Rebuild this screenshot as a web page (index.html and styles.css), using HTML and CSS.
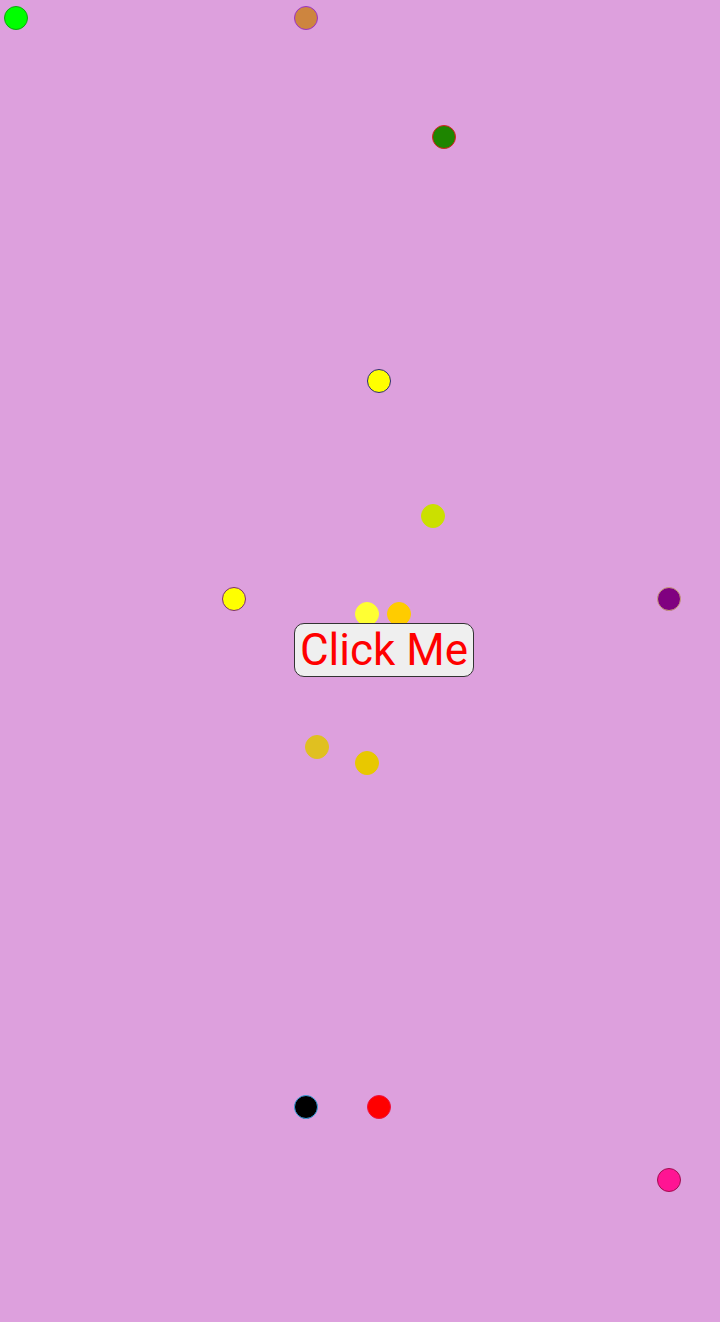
FILE: index.html
```html
<!DOCTYPE html>
<html>
<head>
<meta charset="utf-8">
<link rel="stylesheet" href="styles.css">
</head>
<body>
<div class="stage">
  <span class="dot d1"></span>
  <span class="dot d2"></span>
  <span class="dot d3"></span>
  <span class="dot d4"></span>
  <span class="dot d5"></span>
  <span class="dot d6"></span>
  <span class="dot d7"></span>
  <span class="dot d8"></span>
  <span class="dot d9"></span>
  <span class="dot d10"></span>
  <span class="dot d11"></span>
  <span class="dot d12"></span>
  <span class="dot d13"></span>
  <span class="dot d14"></span>
  <button class="btn">Click Me</button>
</div>
</body>
</html>
```

FILE: styles.css
```css
html, body {
  margin: 0;
  padding: 0;
  background: #dda0dd;
}
.stage {
  position: relative;
  width: 720px;
  height: 1322px;
  overflow: hidden;
}
.dot {
  position: absolute;
  width: 22px;
  height: 22px;
  border: 1px solid transparent;
  border-radius: 50%;
  box-sizing: content-box;
}
.d1 { left: 4px; top: 6px; background: #00ff00; border-color: #11a411; }
.d2 { left: 294px; top: 6px; background: #cd853f; border-color: #9932cc; }
.d3 { left: 432px; top: 125px; background: #1e8500; border-color: #dc2020; }
.d4 { left: 367px; top: 369px; background: #ffff00; border-color: #2b2b7a; }
.d5 { left: 421px; top: 504px; background: #cbe000; border-color: #cbe000; }
.d6 { left: 222px; top: 587px; background: #ffff00; border-color: #7a2a7a; }
.d7 { left: 657px; top: 587px; background: #800080; border-color: #c8a078; }
.d8 { left: 355px; top: 602px; background: #ffff33; border-color: #ffff33; }
.d9 { left: 387px; top: 602px; background: #ffcc00; border-color: #ffcc00; }
.d10 { left: 305px; top: 735px; background: #e0c020; border-color: #e0c020; }
.d11 { left: 355px; top: 751px; background: #e8c800; border-color: #e8c800; }
.d12 { left: 294px; top: 1095px; background: #000000; border-color: #3aa0e0; }
.d13 { left: 367px; top: 1095px; background: #ff0000; border-color: #f01040; }
.d14 { left: 657px; top: 1168px; background: #ff1493; border-color: #a01050; }
.btn {
  position: absolute;
  left: 294px;
  top: 623px;
  width: 180px;
  height: 54px;
  padding: 0;
  background: #efefef;
  border: 1px solid #333;
  border-radius: 10px;
  color: #ff0000;
  font-family: Roboto, "Noto Sans", sans-serif;
  font-size: 44px;
  line-height: 52px;
  text-align: center;
  white-space: nowrap;
}
```
